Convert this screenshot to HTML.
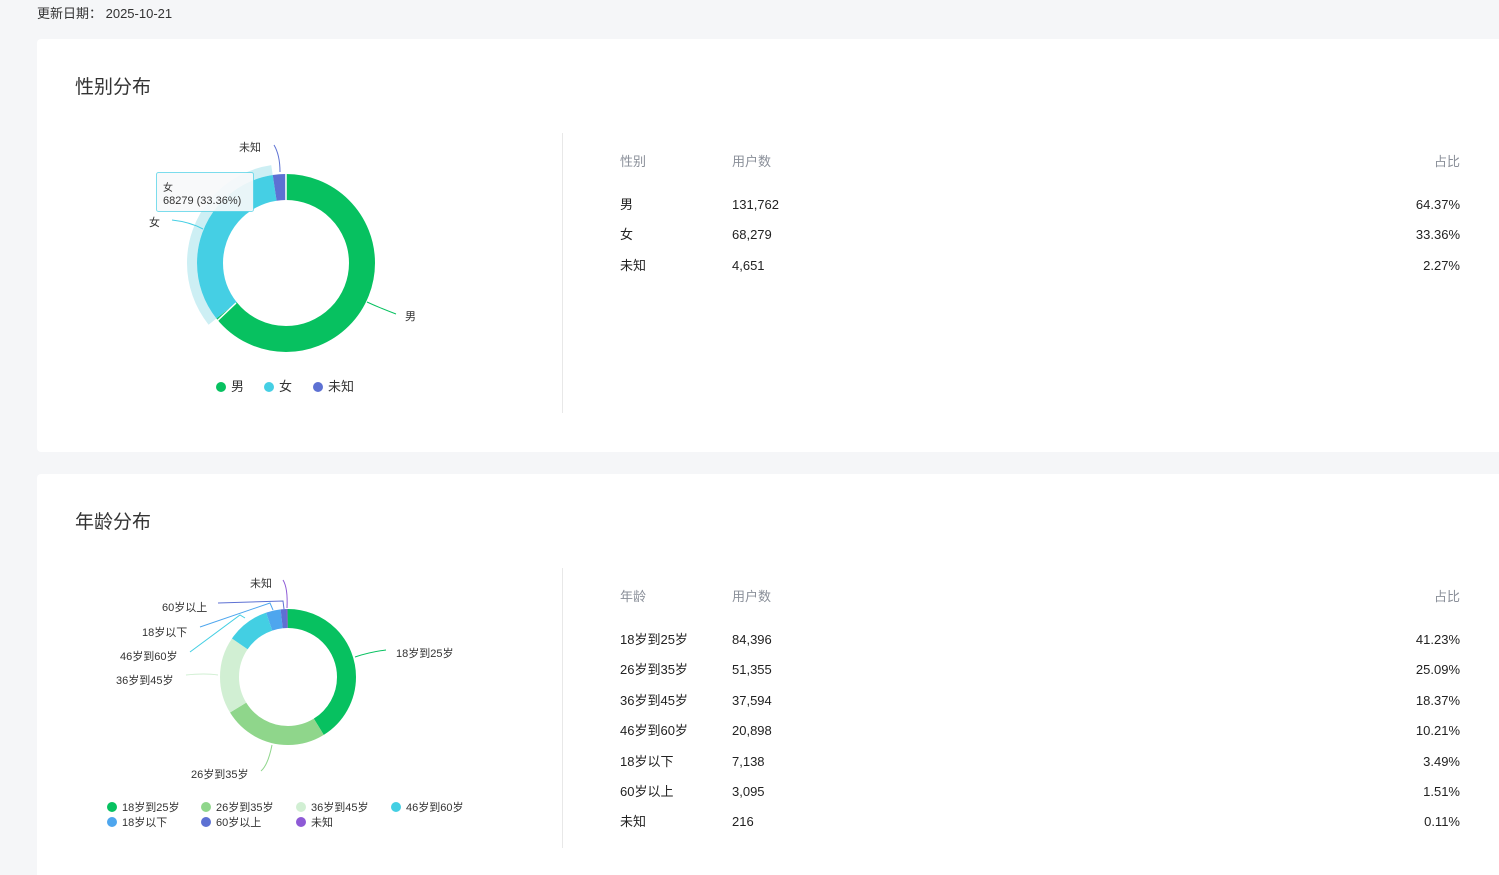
<!DOCTYPE html>
<html><head><meta charset="utf-8"><style>
*{margin:0;padding:0;box-sizing:border-box}
html,body{width:1499px;height:875px;overflow:hidden}
body{background:#f5f6f8;font-family:"Liberation Sans","Noto Sans CJK SC",sans-serif;color:#222;position:relative}
.date{position:absolute;left:37px;top:3px;font-size:13px;color:#333}
.card{position:absolute;left:37px;width:1480px;background:#fff;border-radius:4px}
.title{position:absolute;left:38px;font-size:19px;color:#333}
.div{position:absolute;left:525px;width:1px;background:#e8e8e8}
.t{position:absolute;font-size:13px;white-space:nowrap;margin-top:1px}
.c{margin-top:-2px}
.h{color:#8a8f99}
svg{position:absolute;left:0;top:0}
svg text{font-family:"Liberation Sans","Noto Sans CJK SC",sans-serif;font-size:11px;fill:#333}
</style></head><body>
<div class="date">更新日期：&nbsp;2025-10-21</div>
<div class="card" style="top:39px;height:413px">
 <div class="title" style="top:33px">性别分布</div>
 <div class="div" style="top:94px;height:280px"></div>
</div>
<div class="card" style="top:474px;height:420px">
 <div class="title" style="top:33px">年龄分布</div>
 <div class="div" style="top:94px;height:280px"></div>
</div>

<div class="t h c" style="left:620px;top:153px">性别</div><div class="t h c" style="left:732px;top:153px">用户数</div><div class="t h c" style="right:39px;top:153px">占比</div>
<div class="t c" style="left:620px;top:196px">男</div><div class="t" style="left:732px;top:196px">131,762</div><div class="t" style="right:39px;top:196px">64.37%</div>
<div class="t c" style="left:620px;top:226px">女</div><div class="t" style="left:732px;top:226px">68,279</div><div class="t" style="right:39px;top:226px">33.36%</div>
<div class="t c" style="left:620px;top:257px">未知</div><div class="t" style="left:732px;top:257px">4,651</div><div class="t" style="right:39px;top:257px">2.27%</div>

<div class="t h c" style="left:620px;top:588px">年龄</div><div class="t h c" style="left:732px;top:588px">用户数</div><div class="t h c" style="right:39px;top:588px">占比</div>
<div class="t c" style="left:620px;top:631px">18岁到25岁</div><div class="t" style="left:732px;top:631px">84,396</div><div class="t" style="right:39px;top:631px">41.23%</div>
<div class="t c" style="left:620px;top:661px">26岁到35岁</div><div class="t" style="left:732px;top:661px">51,355</div><div class="t" style="right:39px;top:661px">25.09%</div>
<div class="t c" style="left:620px;top:692px">36岁到45岁</div><div class="t" style="left:732px;top:692px">37,594</div><div class="t" style="right:39px;top:692px">18.37%</div>
<div class="t c" style="left:620px;top:722px">46岁到60岁</div><div class="t" style="left:732px;top:722px">20,898</div><div class="t" style="right:39px;top:722px">10.21%</div>
<div class="t c" style="left:620px;top:753px">18岁以下</div><div class="t" style="left:732px;top:753px">7,138</div><div class="t" style="right:39px;top:753px">3.49%</div>
<div class="t c" style="left:620px;top:783px">60岁以上</div><div class="t" style="left:732px;top:783px">3,095</div><div class="t" style="right:39px;top:783px">1.51%</div>
<div class="t c" style="left:620px;top:813px">未知</div><div class="t" style="left:732px;top:813px">216</div><div class="t" style="right:39px;top:813px">0.11%</div>

<svg width="1499" height="875">
 <g transform="translate(286,263) rotate(-90)" fill="none">
  <circle r="94" stroke="#cdeff4" stroke-width="10" pathLength="100" stroke-dasharray="33.36 66.64" stroke-dashoffset="-64.37"/>
  <circle r="76" stroke="#07c160" stroke-width="26" pathLength="100" stroke-dasharray="64.37 35.63" stroke-dashoffset="0"/>
  <circle r="76" stroke="#45cfe4" stroke-width="26" pathLength="100" stroke-dasharray="33.36 66.64" stroke-dashoffset="-64.37"/>
  <circle r="76" stroke="#5d71d3" stroke-width="26" pathLength="100" stroke-dasharray="2.27 97.73" stroke-dashoffset="-97.73"/>
 </g>
 <line x1="286" y1="172" x2="286" y2="202" stroke="#fff" stroke-width="1.5"/>
 <line x1="236" y1="303" x2="217" y2="321" stroke="#fff" stroke-width="1.5"/>
 <path d="M367 302 Q380 308 396 314" stroke="#07c160" fill="none"/>
 <text x="405" y="320">男</text>
 <path d="M203 229 Q190 222 172 220" stroke="#45cfe4" fill="none"/>
 <text x="149" y="226">女</text>
 <path d="M280 172 Q280 155 274 145" stroke="#5d71d3" fill="none"/>
 <text x="239" y="151">未知</text>
 <rect x="156.5" y="172.5" width="97" height="39" rx="2" fill="#f7f9fa" fill-opacity=".92" stroke="#45cfe4" stroke-opacity=".7"/>
 <text x="163" y="191" style="font-size:10px">女</text>
 <text x="163" y="204">68279 (33.36%)</text>
 <circle cx="221" cy="387" r="5" fill="#07c160"/><text x="231" y="391" style="font-size:13px">男</text>
 <circle cx="269" cy="387" r="5" fill="#45cfe4"/><text x="279" y="391" style="font-size:13px">女</text>
 <circle cx="318" cy="387" r="5" fill="#5d71d3"/><text x="328" y="391" style="font-size:13px">未知</text>

 <g transform="translate(288,677) rotate(-90)" fill="none" stroke-width="19">
  <circle r="58.5" stroke="#07c160" pathLength="100" stroke-dasharray="41.23 58.77" stroke-dashoffset="0"/>
  <circle r="58.5" stroke="#8fd68b" pathLength="100" stroke-dasharray="25.09 74.91" stroke-dashoffset="-41.23"/>
  <circle r="58.5" stroke="#d1efd3" pathLength="100" stroke-dasharray="18.37 81.63" stroke-dashoffset="-66.32"/>
  <circle r="58.5" stroke="#43cfe3" pathLength="100" stroke-dasharray="10.21 89.79" stroke-dashoffset="-84.69"/>
  <circle r="58.5" stroke="#4ea6ee" pathLength="100" stroke-dasharray="3.49 96.51" stroke-dashoffset="-94.9"/>
  <circle r="58.5" stroke="#5d71d3" pathLength="100" stroke-dasharray="1.51 98.49" stroke-dashoffset="-98.39"/>
  <circle r="58.5" stroke="#8e5ad6" pathLength="100" stroke-dasharray="0.3 99.7" stroke-dashoffset="-99.7"/>
 </g>
 <path d="M355 657 Q370 652 386 650" stroke="#07c160" fill="none"/><text x="396" y="657">18岁到25岁</text>
 <path d="M272 745 Q268 765 261 771" stroke="#8fd68b" fill="none"/><text x="191" y="778">26岁到35岁</text>
 <path d="M218 675 Q205 673 186 675" stroke="#d1efd3" fill="none"/><text x="116" y="684">36岁到45岁</text>
 <path d="M245 618 L240 615 L190 652" stroke="#43cfe3" fill="none"/><text x="120" y="660">46岁到60岁</text>
 <path d="M273 610 L270 603 L200 627" stroke="#4ea6ee" fill="none"/><text x="142" y="636">18岁以下</text>
 <path d="M284 609 L283 601 L218 603" stroke="#5d71d3" fill="none"/><text x="162" y="611">60岁以上</text>
 <path d="M287 608 Q288 588 283 580" stroke="#8e5ad6" fill="none"/><text x="250" y="587">未知</text>
 <circle cx="112" cy="807" r="5" fill="#07c160"/><text x="122" y="811">18岁到25岁</text>
 <circle cx="206" cy="807" r="5" fill="#8fd68b"/><text x="216" y="811">26岁到35岁</text>
 <circle cx="301" cy="807" r="5" fill="#d1efd3"/><text x="311" y="811">36岁到45岁</text>
 <circle cx="396" cy="807" r="5" fill="#43cfe3"/><text x="406" y="811">46岁到60岁</text>
 <circle cx="112" cy="822" r="5" fill="#4ea6ee"/><text x="122" y="826">18岁以下</text>
 <circle cx="206" cy="822" r="5" fill="#5d71d3"/><text x="216" y="826">60岁以上</text>
 <circle cx="301" cy="822" r="5" fill="#8e5ad6"/><text x="311" y="826">未知</text>
</svg>
</body></html>
